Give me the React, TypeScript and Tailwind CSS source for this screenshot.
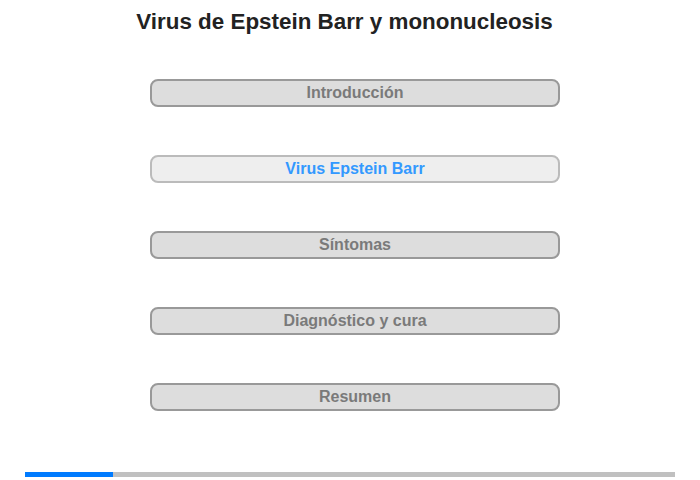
import React from "react";

const items = [
  { label: "Introducción", active: false },
  { label: "Virus Epstein Barr", active: true },
  { label: "Síntomas", active: false },
  { label: "Diagnóstico y cura", active: false },
  { label: "Resumen", active: false },
];

export default function App() {
  return (
    <div
      className="w-[700px] h-[480px] bg-white flex flex-col items-center"
      style={{ fontFamily: '"Liberation Sans", Arial, sans-serif' }}
    >
      <h1 className="mt-[9px] mr-[11px] h-[26px] leading-[26px] text-[22.4px] font-bold text-[#222]">
        Virus de Epstein Barr y mononucleosis
      </h1>
      <div className="mt-[44px] ml-[10px] flex flex-col gap-[48px]">
        {items.map((it) => (
          <div
            key={it.label}
            className={
              it.active
                ? "w-[410px] h-[28px] rounded-[8px] border-2 border-[#bbbbbb] bg-[#eeeeee] flex items-center justify-center text-[16px] font-bold text-[#3399ff]"
                : "w-[410px] h-[28px] rounded-[8px] border-2 border-[#999999] bg-[#dddddd] flex items-center justify-center text-[16px] font-bold text-[#7a7a7a]"
            }
          >
            {it.label}
          </div>
        ))}
      </div>
      <div className="mt-auto mb-[3px] w-[650px] h-[5px] bg-[#c0c0c0] flex">
        <div className="w-[88px] h-full bg-[#007bff]" />
      </div>
    </div>
  );
}
